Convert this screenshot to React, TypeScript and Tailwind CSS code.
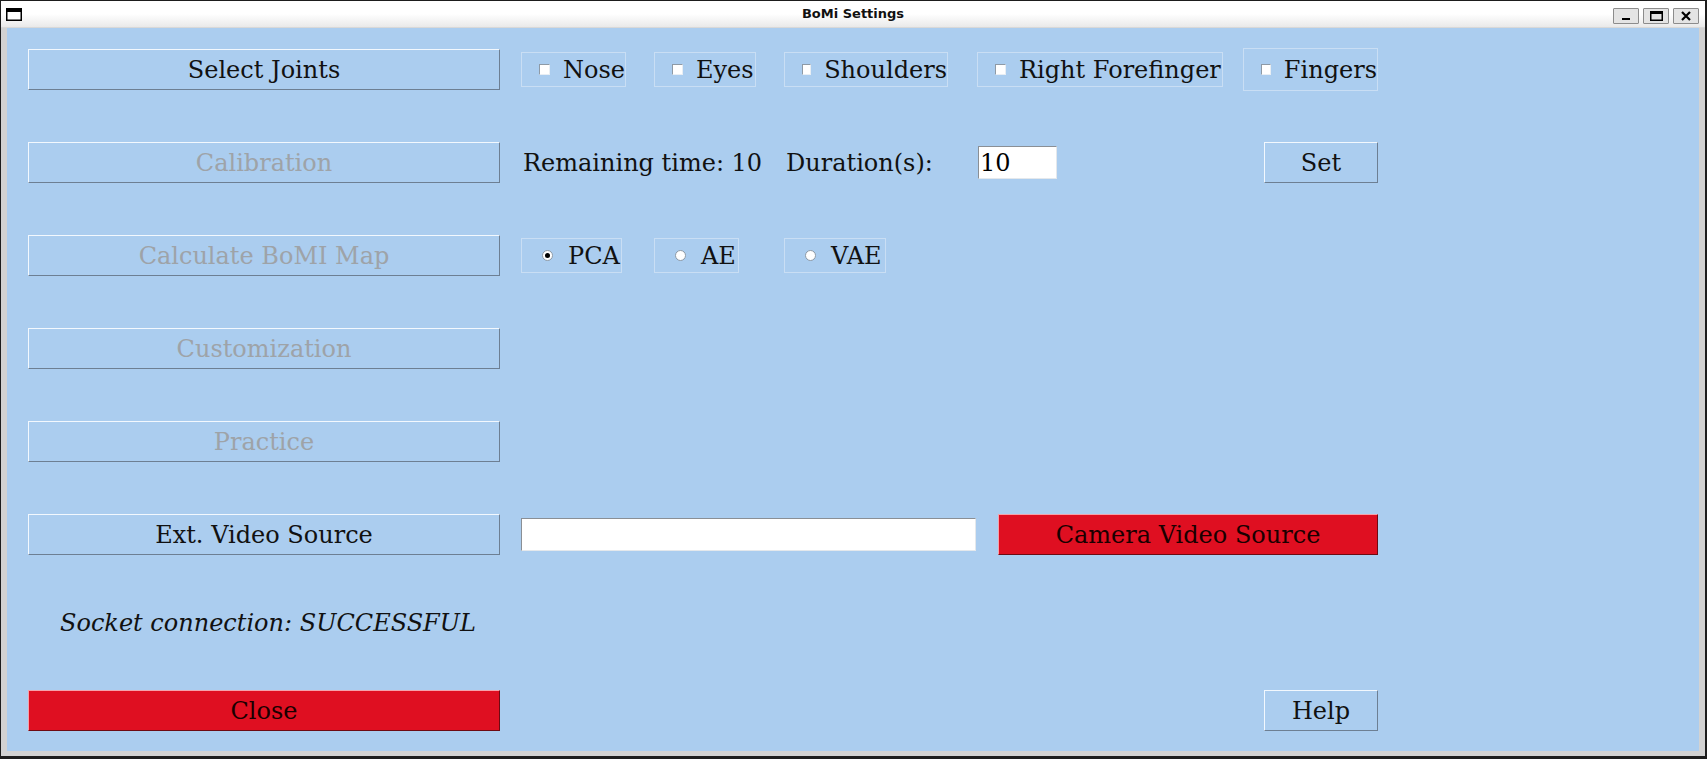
import React from "react";

const serif = "font-['DejaVu_Serif','Liberation_Serif',serif]";

function TkButton({
  label,
  width,
  disabled,
  red,
}: {
  label: string;
  width: string;
  disabled?: boolean;
  red?: boolean;
}) {
  const base =
    "h-[41px] flex items-center justify-center text-[24px] border shrink-0 " + width;
  const colors = red
    ? " bg-[#df0f21] text-[#1a0000] border-t-[#f5a3ab] border-l-[#f5a3ab] border-b-[#6e0a12] border-r-[#6e0a12]"
    : " bg-[#abcdef] border-t-[#f2f8fe] border-l-[#f2f8fe] border-b-[#6d7f93] border-r-[#6d7f93]" +
      (disabled ? " text-[#9ea3a8]" : " text-[#111111]");
  return <div className={base + colors}>{label}</div>;
}

function Check({ label, width, tall }: { label: string; width: string; tall?: boolean }) {
  return (
    <div
      className={
        "flex items-center border border-[#c9def4] shrink-0 " +
        width +
        (tall ? " h-[43px]" : " h-[35px]")
      }
    >
      <div className="ml-[17px] w-[11px] h-[11px] bg-white border border-t-[#8e9aa6] border-l-[#8e9aa6] border-b-[#e8eef4] border-r-[#e8eef4]" />
      <span className="ml-[13px] text-[24px] leading-none text-[#111111] whitespace-nowrap">{label}</span>
    </div>
  );
}

function Radio({ label, width, selected }: { label: string; width: string; selected?: boolean }) {
  return (
    <div className={"flex items-center h-[35px] border border-[#c9def4] shrink-0 " + width}>
      <div className="ml-[20px] w-[11px] h-[11px] rounded-full bg-white border border-[#8e9aa6] flex items-center justify-center">
        {selected ? <div className="w-[5px] h-[5px] rounded-full bg-black" /> : null}
      </div>
      <span className="ml-[15px] text-[24px] leading-none text-[#111111] whitespace-nowrap">{label}</span>
    </div>
  );
}

function Entry({ width, value }: { width: string; value?: string }) {
  return (
    <div
      className={
        "h-[33px] bg-white border border-t-[#8a8f95] border-l-[#8a8f95] border-b-[#e4e8ec] border-r-[#e4e8ec] flex items-center pl-[1px] text-[24px] text-black shrink-0 " +
        width
      }
    >
      {value}
    </div>
  );
}

export default function App() {
  return (
    <div className="w-[1707px] h-[759px] bg-[#1d1d1d] pt-[1px] pl-[1px] pr-[2px] pb-[3px] overflow-hidden">
      <div className="flex flex-col h-full">
        {/* title bar */}
        <div className="h-[27px] grid grid-cols-[1fr_auto_1fr] items-start bg-gradient-to-b from-white via-white to-[#e9e9e9] border-b border-[#d8d8d8]">
          <div className="pl-[5px] pt-[7px]">
            <svg width="16" height="13" viewBox="0 0 16 13">
              <rect x="0.75" y="0.75" width="14.5" height="11.5" fill="white" stroke="black" strokeWidth="1.5" />
              <rect x="0" y="0" width="16" height="4" fill="black" />
            </svg>
          </div>
          <div className="pt-[5px] text-[13px] font-bold text-[#111] font-['DejaVu_Sans',sans-serif] leading-[16px]">
            BoMi Settings
          </div>
          <div className="flex justify-end gap-[4px] pr-[6px] pt-[7px]">
            <div className="w-[26px] h-[16px] bg-[#e4e4e4] border border-[#8c8c8c] rounded-[1px] flex items-end justify-center pb-[3px]">
              <div className="w-[8px] h-[2px] bg-black" />
            </div>
            <div className="w-[26px] h-[16px] bg-[#e4e4e4] border border-[#8c8c8c] rounded-[1px] flex items-center justify-center">
              <svg width="13" height="10" viewBox="0 0 13 10">
                <rect x="0.75" y="0.75" width="11.5" height="8.5" fill="none" stroke="black" strokeWidth="1.5" />
                <rect x="0" y="0" width="13" height="3" fill="black" />
              </svg>
            </div>
            <div className="w-[26px] h-[16px] bg-[#e4e4e4] border border-[#8c8c8c] rounded-[1px] flex items-center justify-center">
              <svg width="10" height="10" viewBox="0 0 10 10">
                <path d="M1 1 L9 9 M9 1 L1 9" stroke="black" strokeWidth="2.2" />
              </svg>
            </div>
          </div>
        </div>

        {/* body */}
        <div className="flex flex-1 min-h-0">
          <div className="w-[6px] bg-[#d2d2d2]" />
          <div className={"flex-1 bg-[#abcdef] pl-[21px] pt-[21px] flex flex-col " + serif}>
            {/* row 1 */}
            <div className="h-[41px] flex items-center">
              <TkButton label="Select Joints" width="w-[472px]" />
              <div className="ml-[21px]">
                <Check label="Nose" width="w-[105px]" />
              </div>
              <div className="ml-[28px]">
                <Check label="Eyes" width="w-[102px]" />
              </div>
              <div className="ml-[28px]">
                <Check label="Shoulders" width="w-[164px]" />
              </div>
              <div className="ml-[29px]">
                <Check label="Right Forefinger" width="w-[246px]" />
              </div>
              <div className="ml-[20px]">
                <Check label="Fingers" width="w-[135px]" tall />
              </div>
            </div>

            {/* row 2 */}
            <div className="h-[41px] mt-[52px] flex items-center">
              <TkButton label="Calibration" width="w-[472px]" disabled />
              <span className="ml-[23px] w-[263px] text-[24px] text-[#111] whitespace-nowrap">Remaining time: 10</span>
              <span className="w-[192px] text-[24px] text-[#111] whitespace-nowrap">Duration(s):</span>
              <Entry width="w-[79px]" value="10" />
              <div className="ml-[207px]">
                <TkButton label="Set" width="w-[114px]" />
              </div>
            </div>

            {/* row 3 */}
            <div className="h-[41px] mt-[52px] flex items-center">
              <TkButton label="Calculate BoMI Map" width="w-[472px]" disabled />
              <div className="ml-[21px]">
                <Radio label="PCA" width="w-[101px]" selected />
              </div>
              <div className="ml-[32px]">
                <Radio label="AE" width="w-[85px]" />
              </div>
              <div className="ml-[45px]">
                <Radio label="VAE" width="w-[102px]" />
              </div>
            </div>

            {/* row 4 */}
            <div className="h-[41px] mt-[52px] flex items-center">
              <TkButton label="Customization" width="w-[472px]" disabled />
            </div>

            {/* row 5 */}
            <div className="h-[41px] mt-[52px] flex items-center">
              <TkButton label="Practice" width="w-[472px]" disabled />
            </div>

            {/* row 6 */}
            <div className="h-[41px] mt-[52px] flex items-center">
              <TkButton label="Ext. Video Source" width="w-[472px]" />
              <div className="ml-[21px]">
                <Entry width="w-[455px]" />
              </div>
              <div className="ml-[22px]">
                <TkButton label="Camera Video Source" width="w-[380px]" red />
              </div>
            </div>

            {/* socket status */}
            <div className="mt-[54px] pl-[32px] h-[28px] leading-[28px] text-[24px] italic text-[#111] whitespace-nowrap">
              Socket connection: SUCCESSFUL
            </div>

            {/* bottom row */}
            <div className="h-[41px] mt-[53px] flex items-center">
              <TkButton label="Close" width="w-[472px]" red />
              <div className="ml-[764px]">
                <TkButton label="Help" width="w-[114px]" />
              </div>
            </div>
          </div>
          <div className="w-[6px] bg-[#d2d2d2]" />
        </div>
        <div className="h-[5px] bg-[#d2d2d2]" />
      </div>
    </div>
  );
}
